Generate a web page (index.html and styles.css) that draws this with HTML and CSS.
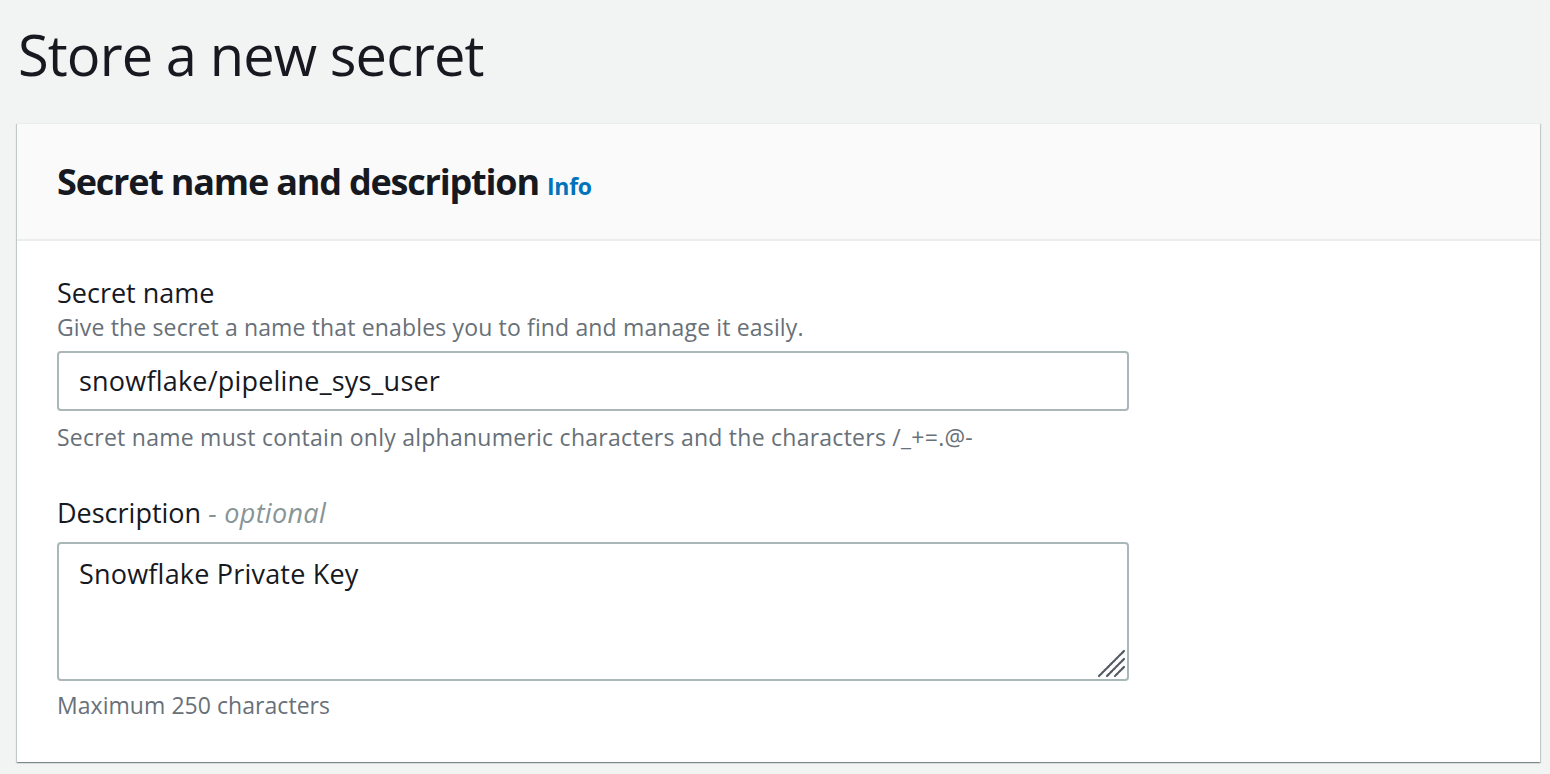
FILE: index.html
```html
<!DOCTYPE html>
<html lang="en">
<head>
<meta charset="utf-8">
<title>Store a new secret</title>
<link rel="stylesheet" href="styles.css">
</head>
<body>
<main class="page">
  <h1 class="page-title">Store a new secret</h1>
  <section class="card">
    <header class="card-header">
      <h2 class="card-title">Secret name and description <a class="info" href="#">Info</a></h2>
    </header>
    <div class="card-body">
      <div class="field">
        <label class="label" for="name">Secret name</label>
        <div class="desc">Give the secret a name that enables you to find and manage it easily.</div>
        <div class="input">snowflake/pipeline_sys_user</div>
        <div class="constraint">Secret name must contain only alphanumeric characters and the characters /_+=.@-</div>
      </div>
      <div class="field field-second">
        <label class="label">Description <span class="optional">- optional</span></label>
        <div class="textarea">Snowflake Private Key
          <svg class="grip" width="30" height="30" viewBox="0 0 30 30"><path d="M28 3 L3 28 M28 11 L11 28 M28 19 L19 28" stroke="#545b64" stroke-width="2.2" stroke-linecap="round" stroke-dasharray="3 1.2"/></svg>
        </div>
        <div class="constraint constraint-last">Maximum 250 characters</div>
      </div>
    </div>
  </section>
</main>
</body>
</html>
```
FILE: styles.css
```css
html, body {
  margin: 0;
  padding: 0;
  background: #f2f3f3;
}
body {
  font-family: "Open Sans", "Noto Sans", sans-serif;
  color: #16191f;
  width: 1550px;
  height: 774px;
  overflow: hidden;
}
.page {
  padding: 0 10px 0 17px;
}
.page-title {
  margin: 0;
  padding: 16px 0 0 1px;
  height: 123px;
  box-sizing: border-box;
  font-size: 56px;
  font-weight: 400;
  line-height: 76px;
  letter-spacing: -0.9px;
}
.card {
  background: #fff;
  box-shadow: 0 1px 1px 0 rgba(0, 28, 36, 0.3), 1px 1px 1px 0 rgba(0, 28, 36, 0.15), -1px 1px 1px 0 rgba(0, 28, 36, 0.15);
  border-top: 1px solid #eaeded;
}
.card-header {
  background: #fafafa;
  border-bottom: 2px solid #eaeded;
  height: 117px;
  box-sizing: border-box;
  padding: 0 40px;
  display: flex;
  align-items: center;
}
.card-title {
  margin: 0;
  font-size: 36px;
  font-weight: 700;
  letter-spacing: -1.2px;
}
.info {
  color: #0073bb;
  font-size: 23px;
  font-weight: 700;
  text-decoration: none;
  letter-spacing: -0.3px;
  margin-left: 0;
}
.card-body {
  padding: 34px 40px 41px;
}
.field {
  display: flex;
  flex-direction: column;
}
.field-second {
  margin-top: 42px;
}
.label {
  font-size: 27px;
  line-height: 36px;
}
.optional {
  color: #879596;
  font-style: italic;
  letter-spacing: 0.3px;
}
.desc {
  color: #687078;
  font-size: 23px;
  letter-spacing: 0.15px;
  line-height: 32px;
  margin-bottom: 8px;
}
.input, .textarea {
  width: 1072px;
  box-sizing: border-box;
  border: 2px solid #aab7b8;
  border-radius: 4px;
  background: #fff;
  font-size: 27px;
  letter-spacing: 0.2px;
  padding: 0 20px;
}
.input {
  height: 60px;
  line-height: 56px;
}
.textarea {
  height: 139px;
  line-height: 36px;
  padding-top: 12px;
  margin-top: 11px;
  position: relative;
}
.grip {
  position: absolute;
  right: 1px;
  bottom: 1px;
}
.constraint {
  color: #687078;
  font-size: 23px;
  letter-spacing: 0.25px;
  line-height: 32px;
  margin-top: 10px;
}
.constraint-last {
  margin-top: 8px;
  letter-spacing: 0.05px;
}
```
